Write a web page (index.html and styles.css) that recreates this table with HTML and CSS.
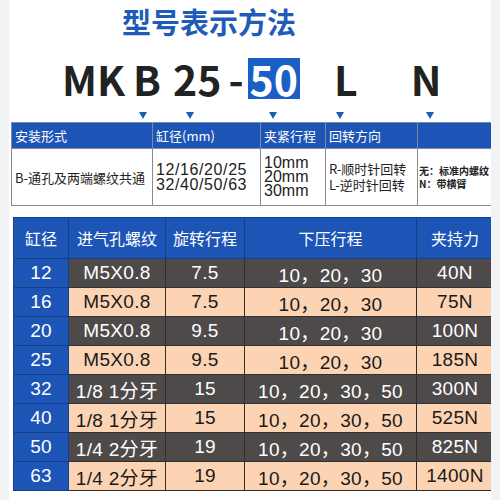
FILE: index.html
```html
<!DOCTYPE html>
<html lang="zh-CN">
<head>
    <meta charset="UTF-8">
    <title>型号表示方法</title>
    <link rel="stylesheet" href="styles.css">
</head>
<body>

<div class="sheet">
    <h1 class="title">型号表示方法</h1>

    <div class="code">
        <span class="seg seg-mk">MK</span>
        <span class="seg seg-b">B</span>
        <span class="seg seg-bore">25</span>
        <span class="seg seg-dash">-</span>
        <span class="seg seg-stroke">50</span>
        <span class="seg seg-l">L</span>
        <span class="seg seg-n">N</span>
    </div>

    <div class="marks">
        <span class="mark m1"></span>
        <span class="mark m2"></span>
        <span class="mark m3"></span>
        <span class="mark m4"></span>
        <span class="mark m5"></span>
    </div>

    <!-- code legend -->
    <table class="legend">
        <tr>
            <th class="c1">安装形式</th>
            <th class="c2">缸径(mm)</th>
            <th class="c3">夹紧行程</th>
            <th class="c4">回转方向</th>
            <th class="c5"></th>
        </tr>
        <tr>
            <td class="mount">B-通孔及两端螺纹共通</td>
            <td class="big wide">12/16/20/25<br>32/40/50/63</td>
            <td class="big tight">10mm<br>20mm<br>30mm</td>
            <td class="dir">R-顺时针回转<br>L-逆时针回转</td>
            <td class="small">无：标准内螺纹<br>N：带横臂</td>
        </tr>
    </table>

    <!-- spec table -->
    <table class="specs">
        <tr>
            <th class="k1">缸径</th>
            <th class="k2">进气孔螺纹</th>
            <th class="k3">旋转行程</th>
            <th class="k4">下压行程</th>
            <th class="k5">夹持力</th>
        </tr>
        <tr class="dark"><td>12</td><td>M5X0.8</td><td>7.5</td><td>10，20，30</td><td>40N</td></tr>
        <tr class="light"><td>16</td><td>M5X0.8</td><td>7.5</td><td>10，20，30</td><td>75N</td></tr>
        <tr class="dark"><td>20</td><td>M5X0.8</td><td>9.5</td><td>10，20，30</td><td>100N</td></tr>
        <tr class="light"><td>25</td><td>M5X0.8</td><td>9.5</td><td>10，20，30</td><td>185N</td></tr>
        <tr class="dark"><td>32</td><td>1/8 1分牙</td><td>15</td><td>10，20，30，50</td><td>300N</td></tr>
        <tr class="light"><td>40</td><td>1/8 1分牙</td><td>15</td><td>10，20，30，50</td><td>525N</td></tr>
        <tr class="dark"><td>50</td><td>1/4 2分牙</td><td>19</td><td>10，20，30，50</td><td>825N</td></tr>
        <tr class="light"><td>63</td><td>1/4 2分牙</td><td>19</td><td>10，20，30，50</td><td>1400N</td></tr>
    </table>
</div>

</body>
</html>
```

FILE: styles.css
```css
body {
    margin: 0;
    padding: 0;
    background-color: #f2f3f5;
    font-family: "Noto Sans CJK SC", "Noto Sans", sans-serif;
}
.sheet {
    width: 482px;
    height: 500px;
    margin-left: 9px;
    background-color: #fff;
    overflow: hidden;
}
.title {
    margin: 0 0 0 113px;
    font-size: 29px;
    line-height: 42px;
    font-weight: bold;
    color: #1f5cba;
}

/* model code line */
.code {
    display: flex;
    align-items: center;
    height: 44px;
    margin-top: 14px;
    font-weight: bold;
    font-size: 41px;
    color: #222;
}
.seg {
    line-height: 41px;
}
.seg-mk { margin-left: 53px; }
.seg-b { margin-left: 8px; }
.seg-bore { margin-left: 12px; }
.seg-dash { margin-left: 7px; }
.seg-stroke {
    margin-left: 4px;
    padding: 0 2px;
    background-color: #1a5fc6;
    color: #fff;
}
.seg-l { margin-left: 34px; }
.seg-n { margin-left: 53px; }

.marks {
    display: flex;
    height: 10px;
    margin-top: 12px;
}
.mark {
    width: 0;
    height: 0;
    border-left: 4px solid transparent;
    border-right: 4px solid transparent;
    border-top: 7px solid #1d5cb8;
}
.m1 { margin-left: 130px; }
.m2 { margin-left: 39px; }
.m3 { margin-left: 75px; }
.m4 { margin-left: 59px; }
.m5 { margin-left: 82px; }

/* legend table */
.legend {
    border-collapse: collapse;
    margin-left: 2px;
    width: 476px;
    table-layout: fixed;
}
.legend th {
    height: 25px;
    padding: 0 0 0 3px;
    background-color: #1c55b5;
    color: #fff;
    font-size: 13px;
    font-weight: normal;
    text-align: left;
    border: 1px solid #7c8aa6;
}
.legend td {
    height: 56px;
    padding: 0 0 0 3px;
    border: 1px solid #8a8a8a;
    color: #222;
    vertical-align: middle;
    white-space: nowrap;
}
.legend .c1 { width: 137px; }
.legend .c2 { width: 104px; }
.legend .c3 { width: 61px; }
.legend .c4 { width: 88px; }
.legend .c5 { width: 71px; }
.mount {
    font-size: 13px;
}
.big {
    font-family: "Liberation Sans", sans-serif;
    font-size: 16px;
    line-height: 15px;
}
.wide {
    letter-spacing: 0.6px;
}
.tight {
    line-height: 14px;
}
.dir {
    font-size: 13px;
    line-height: 16px;
}
.legend .small {
    padding-left: 1px;
    font-size: 10px;
    line-height: 13px;
    font-weight: bold;
}

/* spec table */
.specs {
    border-collapse: collapse;
    margin: 11px 0 0 4px;
    width: 475px;
    table-layout: fixed;
}
.specs th {
    height: 40px;
    padding: 0;
    background-color: #1c55b5;
    color: #fff;
    font-size: 16px;
    font-weight: normal;
    border: 1px solid #173f86;
}
.specs td {
    height: 28px;
    padding: 0;
    text-align: center;
    font-family: "Liberation Sans", "Noto Sans CJK SC", sans-serif;
    font-size: 19px;
    letter-spacing: 0.3px;
    border: 1px solid #2f2f2f;
}
.specs .k1 { width: 54px; }
.specs .k2 { width: 96px; }
.specs .k3 { width: 78px; }
.specs .k4 { width: 171px; }
.specs .k5 { width: 76px; }
.specs td:first-child {
    background-color: #1c55b5;
    color: #fff;
    border-color: #173f86;
}
.dark td {
    background-color: #4d4a49;
    color: #fff;
}
.light td {
    background-color: #fcd4b4;
    color: #1a1a1a;
}
```
